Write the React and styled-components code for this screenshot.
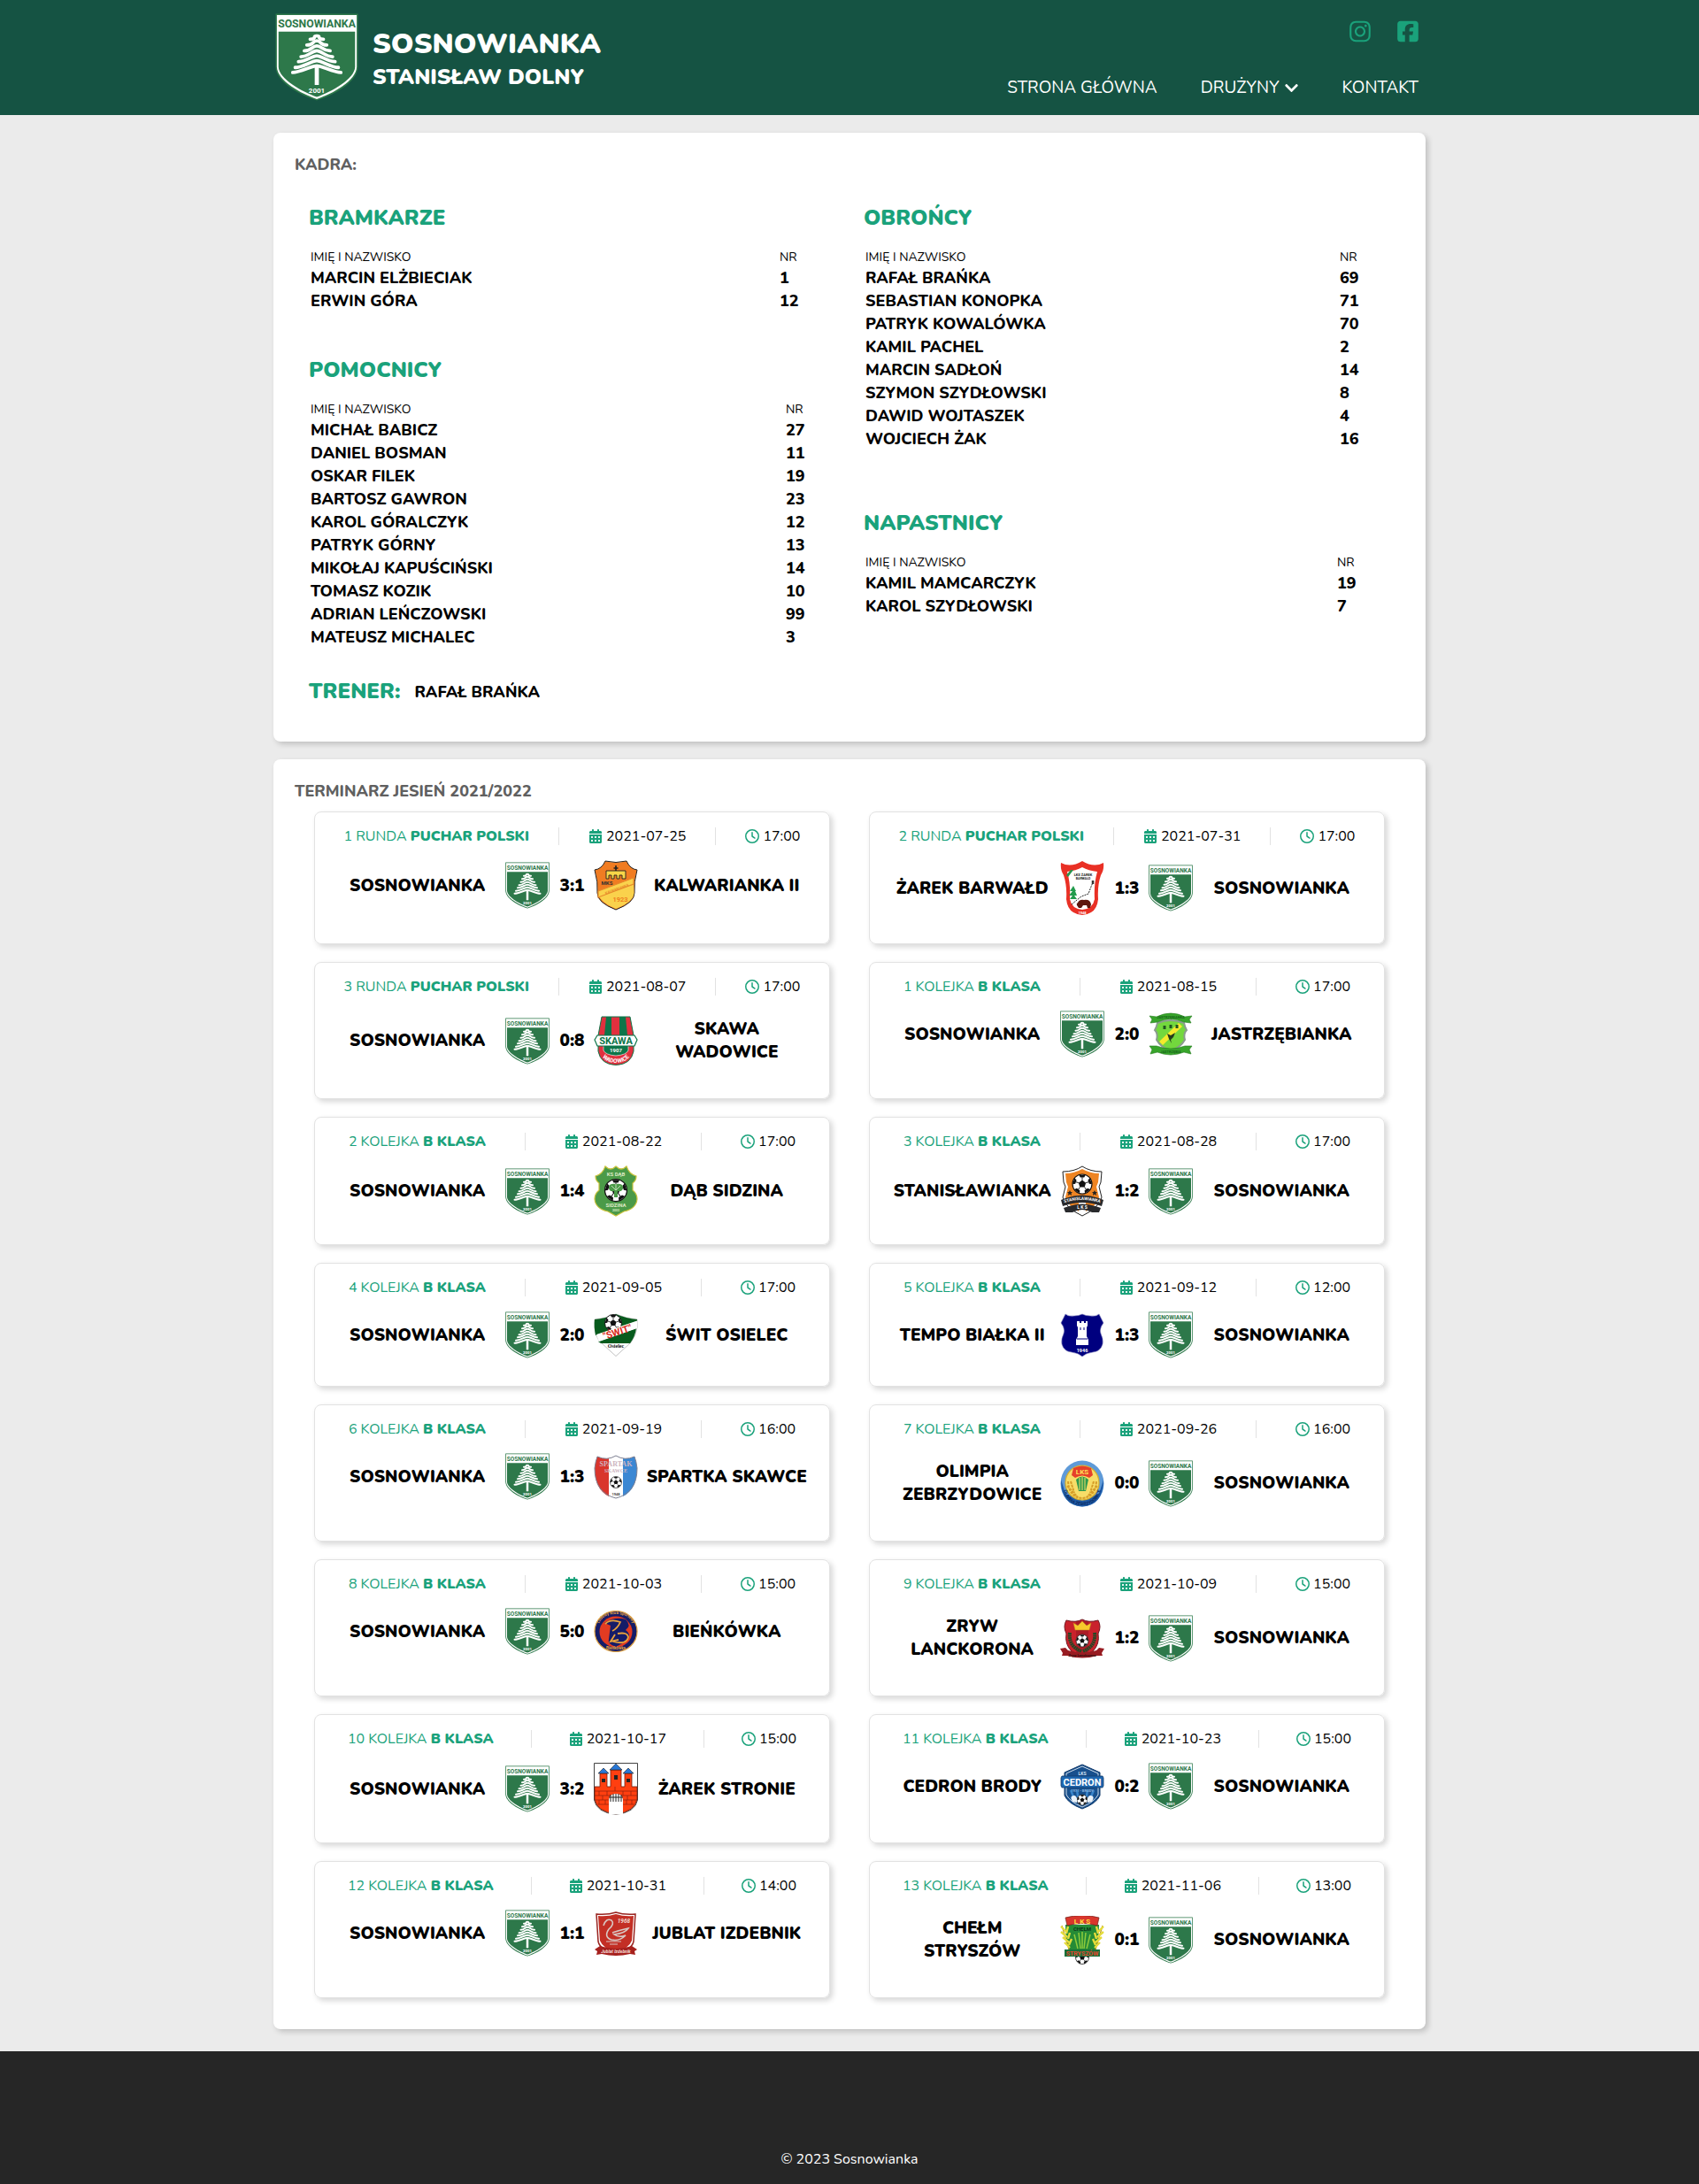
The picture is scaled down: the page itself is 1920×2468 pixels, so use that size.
import React from "react";
import styled, { createGlobalStyle } from "styled-components";
import { FaChevronDown } from "react-icons/fa";
import {
  FaInstagram,
  FaSquareFacebook,
  FaCalendarDays,
  FaRegClock,
} from "react-icons/fa6";

const color = {
  header: "#155343",
  accent: "#1aa27b",
  page: "#ebebeb",
  muted: "#606060",
  line: "#e2e2e2",
  footer: "#262626",
  crest: "#2d784a",
};

const GlobalStyle = createGlobalStyle`
  *, *::before, *::after { box-sizing: border-box; }
  body {
    margin: 0;
    background: ${color.page};
    color: #000;
    font-family: Nunito, Lato, "Open Sans", sans-serif;
    font-size: 19px;
    line-height: 26px;
  }
  h1, h2, h3, p, ul { margin: 0; padding: 0; }
  ul { list-style: none; }
  a { color: inherit; text-decoration: none; }
  svg { display: block; flex: none; }
`;

/* ---------- crests ---------- */

const CrestSvg = styled.svg`
  width: ${(p) => p.$width}px;
  height: ${(p) => p.$height}px;
  font-family: Roboto, "Liberation Sans", sans-serif;
  font-weight: 700;
  text-anchor: middle;
`;

const branches = [
  [42, 58, 27, 31],
  [38, 62, 33, 38],
  [35, 66, 39, 45],
  [31, 69, 45, 52],
  [28, 72, 51, 58],
  [24, 76, 57, 65],
  [21, 79, 63, 71],
];

function Sosnowianka({ large }) {
  return (
    <CrestSvg $width={large ? 94 : 50} $height={large ? 99 : 53} viewBox="0 0 100 105" role="img" aria-label="Herb Sosnowianka">
      <path d="M0.500 0.500H99.500V64C99.500 83 69 99 50 104.500C31 99 0.500 83 0.500 64Z" fill={color.crest} />
      <path d="M2 2H98V64C98 81 68 97 50 103C32 97 2 81 2 64Z" fill="#fff" />
      <path d="M4 22H96V64C96 79 67 94.500 50 100.500C33 94.500 4 79 4 64Z" fill={color.crest} />
      <text x="50" y="17" fontSize="13" fill={color.crest}>SOSNOWIANKA</text>
      <g fill="none" stroke="#fff" strokeWidth="4" strokeLinecap="round" strokeLinejoin="round">
        {branches.map(([l, r, top, end]) => (
          <path
            key={top}
            d={`M${l} ${end}C${l + 9} ${end} ${44} ${top} 50 ${top}C${56} ${top} ${r - 9} ${end} ${r} ${end}`}
          />
        ))}
      </g>
      <path d="M47.500 64H52.500V86H47.500Z" fill="#fff" />
      <text x="50" y="96" fontSize="8.500" fill="#fff">2001</text>
    </CrestSvg>
  );
}

function Ball({ x, y, r }) {
  const spots = [0, 72, 144, 216, 288];
  return (
    <g transform={`translate(${x} ${y}) scale(${r / 10})`}>
      <circle r="10" fill="#fff" stroke="#111" strokeWidth="1" />
      <path d="M0-4L3.800-1.200 2.400 3.200H-2.400L-3.800-1.200Z" fill="#111" />
      {spots.map((a) => (
        <g key={a} transform={`rotate(${a})`}>
          <path d="M-3.400-9.400H3.400L2-6.800H-2Z" fill="#111" />
          <path d="M0-4V-7" stroke="#111" strokeWidth="0.800" />
        </g>
      ))}
    </g>
  );
}

const crests = {
  kalwarianka: [57, (
    <>
      <path d="M13 1Q25 4 37 1Q41 10 49 11Q45 25 46 37Q46 48 25 56Q4 48 4 37Q5 25 1 11Q9 10 13 1Z" fill="#f07c22" stroke="#222" strokeWidth="1" />
      <path d="M5 37L45 22Q45 30 45.500 37Q45 47 25 55Q6 47 5 37Z" fill="#fad24c" />
      <path d="M5 35L45 20V27L5 42Z" fill="#fad24c" stroke="#e78a2b" strokeWidth="1.200" />
      <path d="M14 21V12H36V21H32V17H29V21H26V17H23V21H20V17H17V21Z" fill="#f8d648" stroke="#222" strokeWidth="0.900" />
      <path d="M25 6V12M22.500 9H27.500" stroke="#222" strokeWidth="1.600" />
      <text x="15" y="28" fontSize="6" fill="#333">MKS</text>
      <text x="26" y="34" fontSize="4" fill="#e78a2b" transform="rotate(-20 26 32)">KALWARIANKA</text>
      <text x="30" y="47" fontSize="7.500" fill="#ef8122">1923</text>
    </>
  )],
  barwald: [63, (
    <>
      <path d="M1 3Q12 9 25 1Q38 9 49 3Q50 11 46 17Q42 29 43 44Q42 55 35 59Q25 65 15 59Q8 55 7 44Q8 29 4 17Q0 11 1 3Z" fill="#e93025" />
      <path d="M8 13Q18 12 25 8Q32 12 42 13Q38 27 39 44Q37 55 25 56Q13 55 11 44Q12 27 8 13Z" fill="#fff" />
      <path d="M7 17L12 11H15L9 19Z" fill="#26934b" />
      <text x="26" y="18" fontSize="4" fill="#222">LKS ŻAREK</text>
      <text x="26" y="22" fontSize="3.500" fill="#222">BARWAŁD</text>
      <path d="M13 50L19 45 24 41 32 38 35 30 38 23" stroke="#222" fill="none" strokeWidth="1" strokeDasharray="2 1" />
      <path d="M37 23V27" stroke="#333" strokeWidth="2.500" />
      <path d="M15 29L11 35H14L10 40H14L11 44H19L16 40H19L17 35H18Z" fill="#229b4d" />
      <path d="M19 51Q18 49 20 48Q22 44 27 45Q34 44 35 50L34 54H31L30 51H26L24 54H21Z" fill="#5d160d" />
      <text x="25" y="61" fontSize="4" fill="#fff">1948</text>
    </>
  )],
  skawa: [56, (
    <>
      <path d="M9 1H41L45 22V40Q42 55 25 55.500Q8 55 5 40V22Z" fill="#e1303e" stroke="#0c7548" strokeWidth="1" />
      <path d="M14 1H20V22H12ZM29 1H36L38 22H29Z" fill="#0d7549" />
      <path d="M11 30H39V39Q37 44 25 45Q13 44 11 39Z" fill="#0d7549" stroke="#fff" strokeWidth="0.600" />
      <path d="M4 22H46L49 27 46 34H4L1 27Z" fill="#fff" stroke="#0c7548" strokeWidth="1.200" />
      <text x="25" y="32" fontSize="11" fill="#0c7548">SKAWA</text>
      <text x="25" y="41" fontSize="6" fill="#fff">1907</text>
      <path id="skawa-arc" d="M7 39Q10 53 25 53Q40 53 43 39" fill="none" />
      <text fontSize="6.500" fill="#fff"><textPath href="#skawa-arc" startOffset="50%">WADOWICE</textPath></text>
    </>
  )],
  jastrzebianka: [49, (
    <>
      <path d="M10 12Q25 6 40 12Q41 17 43 20Q39 24 41 31Q36 40 25 43Q14 40 9 31Q11 24 7 20Q9 17 10 12Z" fill="#73d83d" stroke="#8a9c8d" strokeWidth="2" />
      <path d="M12 33L34 12 38 16 16 37Z" fill="#f4ea2c" />
      <path d="M18 15V19M25 14V18M32 14V18" stroke="#21551f" strokeWidth="3" />
      <path d="M21 24L25 26 30 23 28 28 25 31 26 35 23 30Z" fill="#243b1c" />
      <path d="M1 4L9 5Q25-3 41 5L49 4 46 8 48 12 40 11Q25 4 10 11L2 12 4 8Z" fill="#38a52b" stroke="#247a1d" strokeWidth="0.600" />
      <path d="M1 38L9 38Q25 44 41 38L49 38 46 42 48 47 40 45Q25 51 10 45L2 47 4 42Z" fill="#38a52b" stroke="#247a1d" strokeWidth="0.600" />
      <text x="25" y="6.500" fontSize="4" fill="#17661a">JASTRZĘBIANKA</text>
      <text x="25" y="46" fontSize="4" fill="#17661a">JASTRZĘBIA</text>
    </>
  )],
  dab: [58, (
    <>
      <path d="M13 1Q19 7 25 1Q31 7 37 1Q40 10 48 12Q48 17 44 20V28Q49 32 49 38Q48 49 34 52L25 57 16 52Q2 49 1 38Q1 32 6 28V20Q2 17 2 12Q10 10 13 1Z" fill="#4b9a48" stroke="#c9c23c" strokeWidth="1.200" />
      <Ball x={25} y={28} r={12.5} />
      <path d="M17 25Q17 20 25 21Q33 20 33 25Q33 30 27 29V36H23V29Q17 30 17 25Z" fill="#4b9a48" />
      <path d="M20 23L25 28 30 23M25 21V28" stroke="#cfe3c4" strokeWidth="0.900" fill="none" />
      <text x="25" y="12" fontSize="6" fill="#dce9c5">KS DĄB</text>
      <text x="25" y="47" fontSize="6" fill="#dce9c5">SIDZINA</text>
      <text x="25" y="52" fontSize="3.500" fill="#dce9c5">2003</text>
    </>
  )],
  stanislawianka: [58, (
    <>
      <path d="M3 7Q16 7 25 1Q34 7 47 7L46 19 44 24 47 36Q44 48 25 57Q6 48 3 36L6 24 4 19Z" fill="#fff" stroke="#222" strokeWidth="1" />
      <path d="M6 9Q16 9 25 4Q34 9 44 9L43 19 41 24 44 36Q41 47 25 54Q9 47 6 36L9 24 7 19Z" fill="#ee8422" />
      <path d="M21 38H29V54H21Z" fill="#fff" />
      <Ball x={25} y={21} r={11} />
      <path d="M11 28L12 30H14L12.500 31.500 13 34 11 32.500 9 34 9.500 31.500 8 30H10ZM39 28L40 30H42L40.500 31.500 41 34 39 32.500 37 34 37.500 31.500 36 30H38Z" fill="#222" />
      <path d="M1 39L6 37Q25 30 44 37L49 39 47 46Q25 38 3 46Z" fill="#292a2d" />
      <path d="M4 48L10 46Q25 41 40 46L46 48 44 53H36Q25 47 14 53H6Z" fill="#292a2d" />
      <path id="stanislawianka-arc" d="M3 43Q25 35 47 43" fill="none" />
      <text fontSize="4.800" fill="#fff"><textPath href="#stanislawianka-arc" startOffset="50%">STANISŁAWIANKA</textPath></text>
      <text x="25" y="49" fontSize="5" fill="#fff">L K S</text>
    </>
  )],
  swit: [49, (
    <>
      <path d="M1 7Q13 6 25 1Q37 6 49 7V16Q48 25 42 33L25 48.500 8 33Q2 27 1 16Z" fill="#fff" stroke="#999" strokeWidth="0.600" />
      <path d="M1 7Q13 6 25 1Q37 6 49 7V9L2 25Q0 15 1 7Z" fill="#075b1d" />
      <path d="M5 32L48 17Q47 26 41 34H8Z" fill="#075b1d" />
      <Ball x={22} y={11} r={9.5} />
      <path d="M3 24L49 8.500V17L6 32Z" fill="#fff" />
      <text x="27" y="25" fontSize="11" fill="#d72b20" transform="rotate(-18 27 22)">"ŚWIT"</text>
      <text x="25" y="39" fontSize="6" fill="#111" fontFamily="Liberation Serif">Osielec</text>
    </>
  )],
  tempo: [49, (
    <>
      <path d="M6 1Q9 4 16 3Q21 3 25 1Q29 3 34 3Q41 4 44 1L49 11Q44 17 46 23Q49 29 48 35Q46 43 37 44Q29 45 25 49Q21 45 13 44Q4 43 2 35Q1 29 4 23Q6 17 1 11Z" fill="#00007f" stroke="#8585bd" strokeWidth="0.600" />
      <path d="M19 9H22V11H24V9H27V11H29V9H31V14L30 16V26L32 30V36H18V30L20 26V16L19 14Z" fill="#fff" />
      <path d="M23 16V19M27 16V19M19 29H31" stroke="#00007f" strokeWidth="1" />
      <text x="25" y="44" fontSize="5.500" fill="#fff">1946</text>
    </>
  )],
  spartak: [50, (
    <>
      <path d="M4 2Q15 7 25 1Q35 7 46 2Q48 7 49 15Q49 43 25 49Q1 43 1 15Q2 7 4 2Z" fill="#fff" />
      <path d="M4 2Q10 5 17 4V47Q1 39 1 15Q2 7 4 2Z" fill="#d9352c" />
      <path d="M46 2Q40 5 33 4V47Q49 39 49 15Q48 7 46 2Z" fill="#3b87d3" />
      <path d="M4 2Q15 7 25 1Q35 7 46 2Q48 7 49 15Q49 43 25 49Q1 43 1 15Q2 7 4 2Z" fill="none" stroke="#7d7f91" strokeWidth="1" />
      <text x="25" y="13" fontSize="8" fill="#cdb4c0" fontFamily="Liberation Serif">SPARTAK</text>
      <text x="25" y="20" fontSize="6" fill="#cdb4c0" fontFamily="Liberation Serif">SKAWCE</text>
      <Ball x={25} y={31} r={6.5} />
      <text x="25" y="46" fontSize="4" fill="#444">1948</text>
    </>
  )],
  olimpia: [53, (
    <>
      <ellipse cx="25" cy="26.500" rx="24.500" ry="26" fill="#5e9ad8" />
      <path d="M1 22Q1 51 25 52.500Q49 51 49 22L44 38 25 46 6 38Z" fill="#1e5aa6" />
      <ellipse cx="25" cy="25.500" rx="19" ry="19.500" fill="#f7dd68" stroke="#d6ad2e" strokeWidth="1.200" />
      <path d="M9 24Q10 42 25 43Q40 42 41 24M12 24L16 37M38 24L34 37M8 29L20 42M42 29L30 42" stroke="#d69d28" strokeWidth="2" fill="none" strokeDasharray="3 1" />
      <path d="M15 9Q25 4 35 9L37 17 33 20Q25 15 17 20L13 17Z" fill="#e6402a" />
      <text x="25" y="15.500" fontSize="8" fill="#ffdf55">LKS</text>
      <path d="M18 22Q25 15 32 22L29 35H21Z" fill="#2e9a4d" />
      <path d="M22 20V34M25 19V34M28 20V34" stroke="#f7dd68" strokeWidth="1" />
      <path id="olimpia-arc" d="M3 22Q3 51 25 51Q47 51 47 22" fill="none" />
      <text fontSize="5" fill="#0a2a63"><textPath href="#olimpia-arc" startOffset="50%">OLIMPIA ZEBRZYDOWICE</textPath></text>
    </>
  )],
  bienkowka: [47, (
    <>
      <ellipse cx="25" cy="23.500" rx="24" ry="23" fill="#151c68" stroke="#dda142" strokeWidth="1.200" />
      <ellipse cx="25" cy="24" rx="18.500" ry="17.500" fill="#e23b22" />
      <path d="M12 14Q24 6 36 10Q43 17 36 22Q44 28 36 35L25 41Q15 38 17 32L19 17Z" fill="#151c68" />
      <path d="M13 15Q19 9 30 13Q27 20 21 23M22 35Q37 39 39 30Q38 24 27 26M24 27L19 35 28 33" fill="none" stroke="#eba33b" strokeWidth="1.800" />
      <path id="bienkowka-arc" d="M4 24Q5 4 25 4Q45 4 46 24" fill="none" />
      <text fontSize="4.500" fill="#e4a444"><textPath href="#bienkowka-arc" startOffset="50%">Ludowy Klub Sportowy</textPath></text>
      <text x="25" y="44" fontSize="4.500" fill="#e4a444">Bieńkówka</text>
    </>
  )],
  zryw: [45, (
    <>
      <path d="M7 2Q18 5 25 1Q32 5 43 2Q47 9 43 17Q45 29 37 37L25 43 13 37Q5 29 7 17Q3 9 7 2Z" fill="#c9222c" stroke="#701820" strokeWidth="1" />
      <path d="M18 3H32V38L25 42 18 38Z" fill="#8d151f" opacity="0.500" />
      <path d="M15 5L20 8 25 3 30 8 35 5 33 13H17Z" fill="#f6c92c" stroke="#bb801f" strokeWidth="0.500" />
      <path d="M11 16Q9 31 24 37M39 16Q41 31 26 37" stroke="#244725" strokeWidth="4" fill="none" strokeDasharray="2 0.500" />
      <Ball x={25} y={25} r={7} />
      <path d="M0 34L6 33 9 36Q25 41 41 36L44 33 50 34 47 39 48 42 42 42Q25 47 8 42L2 42 3 39Z" fill="#981c22" />
      <text x="25" y="43" fontSize="4" fill="#31100f">Zryw Lanckorona</text>
    </>
  )],
  stronie: [59, (
    <>
      <path d="M0.500 0.500H49.500V42Q47 56 25 58.500Q3 56 0.500 42Z" fill="#fff" stroke="#444" strokeWidth="1" />
      <path d="M1 27H7V12H15V27H19V8H31V27H35V12H43V27H49V41Q47 55 25 58Q3 55 1 41Z" fill="#ff3f10" stroke="#702010" strokeWidth="0.800" />
      <path d="M5 12L11 6 17 12ZM18 8L25 1 32 8ZM33 12L39 6 45 12Z" fill="#2877d6" stroke="#222" strokeWidth="0.600" />
      <path d="M9 18H13V22H9ZM23 14H27V19H23ZM37 18H41V22H37Z" fill="#222" />
      <path d="M1 32H49M1 37H49M1 42H49M4 47H46M6 32V37M15 32V37M24 27V32M33 32V37M42 32V37M10 37V42M38 37V42M6 42V47M13 42V47M37 42V47M43 42V47" stroke="#8c210c" strokeWidth="0.700" />
      <path d="M17 58V43Q17 35 25 35Q33 35 33 43V58Q25 59 17 58Z" fill="#fff" />
      <path d="M19 36V44M22 35V44M25 35V44M28 35V44M31 36V44M17 39H33" stroke="#222" strokeWidth="1" />
    </>
  )],
  cedron: [52, (
    <>
      <path d="M25 1L45 10V36Q41 45 25 51Q9 45 5 36V10Z" fill="#18508d" stroke="#123a6b" strokeWidth="1" />
      <path d="M25 3L43 11V35Q39 43 25 49Q11 43 7 35V11Z" fill="none" stroke="#fff" strokeWidth="0.800" />
      <path d="M12 30L17 42M19 30L21 42M38 30L33 42M31 30L29 42" stroke="#3884cb" strokeWidth="2.500" />
      <Ball x={25} y={41} r={6} />
      <path d="M14 43Q10 36 16 36Q20 37 19 44ZM36 43Q40 36 34 36Q30 37 31 44Z" fill="#eaf2fa" />
      <path d="M2 14H48L49 16V25L48 27H2L1 25V16Z" fill="#1e67b0" stroke="#123a6b" strokeWidth="0.800" />
      <text x="25" y="24.500" fontSize="11" fill="#fff">CEDRON</text>
      <text x="25" y="13" fontSize="5" fill="#cfe1f4">LKS</text>
      <text x="25" y="32" fontSize="4" fill="#8bb6df">1971 • BRODY</text>
    </>
  )],
  jublat: [50, (
    <>
      <path d="M3 3Q16 4 25 1Q34 4 47 3L45 34Q43 43 25 49Q7 43 5 34Z" fill="#fff" stroke="#992521" strokeWidth="1.500" />
      <path d="M5 5Q16 6 25 3Q34 6 45 5L43 33Q40 41 25 47Q10 41 7 33Z" fill="#c32f25" />
      <path d="M11 16Q14 7 20 10Q24 14 17 20Q11 29 20 32Q29 34 36 27Q28 30 23 26Q35 25 39 19Q30 21 21 24" fill="none" stroke="#d8c8c4" strokeWidth="1.600" />
      <path d="M14 34H31M18 37H27" stroke="#d8c8c4" strokeWidth="1.200" />
      <text x="34" y="13" fontSize="6.500" fill="#f0d7d1" fontStyle="italic">1968</text>
      <path d="M1 43L7 39Q25 45 43 39L49 43 46 45 47 49 41 48Q25 52 9 48L3 49 4 45Z" fill="#a6211e" />
      <text x="25" y="47" fontSize="5" fill="#f4ded8" fontStyle="italic">Jublat Izdebnik</text>
    </>
  )],
  chelm: [55, (
    <>
      <path d="M6 10H44Q44 30 38 44H12Q6 30 6 10Z" fill="#258b36" />
      <path d="M6 2Q25-3 44 2L42 11Q25 6 8 11Z" fill="#d9362d" stroke="#702019" strokeWidth="0.700" />
      <text x="25" y="8.500" fontSize="8" fill="#ffdf3b">L K S</text>
      <text x="25" y="17" fontSize="6" fill="#0c351a">CHEŁM</text>
      <path d="M16 21L20 37M21 19L23 37M25 18V37M29 19L27 37M34 21L30 37" stroke="#8ecb3c" strokeWidth="1.500" />
      <path d="M2 11L10 38M48 11L40 38" stroke="#b9971e" strokeWidth="1.200" />
      <path d="M1 12L7 18M1 18L8 24M3 24L10 30M5 30L11 36M9 12L7 20M11 19L9 26M13 26L10 33M49 12L43 18M49 18L42 24M47 24L40 30M45 30L39 36M41 12L43 20M39 19L41 26M37 26L40 33" stroke="#e5dc3b" strokeWidth="2.400" />
      <Ball x={25} y={47} r={7.5} />
      <path d="M5 38H45V46H5Z" fill="#17713a" />
      <text x="25" y="44.500" fontSize="7" fill="#e5462d">STRYSZÓW</text>
    </>
  )],
};

function Crest({ club }) {
  if (club === "sosnowianka") return <Sosnowianka />;
  const [height, drawing] = crests[club];
  return (
    <CrestSvg $width={50} $height={height} viewBox={`0 0 50 ${height}`} aria-hidden="true">
      {drawing}
    </CrestSvg>
  );
}

/* ---------- header ---------- */

const Container = styled.div`
  width: 100%;
  max-width: 1302px;
  margin: 0 auto;
`;

const Header = styled.header`
  background: ${color.header};
  color: #fff;
`;

const HeaderInner = styled(Container)`
  display: flex;
  justify-content: space-between;
  min-height: 130px;
  padding: 15px 8px 16px 2px;
`;

const Brand = styled.a`
  display: flex;
  align-items: center;
  gap: 16px;
`;

const BrandName = styled.h1`
  display: flex;
  flex-direction: column;
  padding-top: 4px;
  font-size: 32px;
  font-weight: 900;
  line-height: 40px;
`;

const BrandPlace = styled.span`
  font-size: 24px;
  line-height: 34px;
`;

const HeaderSide = styled.div`
  display: flex;
  flex-direction: column;
  align-items: flex-end;
  gap: 37px;
  padding-top: 7px;
`;

const Socials = styled.div`
  display: flex;
  gap: 30px;
  color: ${color.accent};

  svg {
    width: 24px;
    height: 27px;
  }
`;

const Nav = styled.nav`
  display: flex;
  gap: 49px;
  font-size: 19px;
`;

const NavLink = styled.a`
  display: flex;
  align-items: center;
  gap: 5px;

  svg { font-size: 17px; }
`;

/* ---------- panels ---------- */

const Main = styled(Container)`
  display: flex;
  flex-direction: column;
  gap: 20px;
  padding: 20px 0 25px;
`;

const Panel = styled.section`
  padding: 23px 24px ${(p) => p.$bottom}px;
  border-radius: 8px;
  background: #fff;
  box-shadow: 3px 3px 6px rgba(0, 0, 0, 0.18);
`;

const PanelTitle = styled.h2`
  color: ${color.muted};
  font-size: 18px;
  font-weight: 800;
  line-height: 26px;
`;

const Squad = styled.div`
  display: grid;
  grid-template-columns: 1fr 1fr;
  padding-top: 31px;
`;

const SquadColumn = styled.div`
  display: flex;
  flex-direction: column;
  gap: ${(p) => p.$gap}px;
  padding: 0 16px;
`;

const GroupTitle = styled.h3`
  color: ${color.accent};
  font-size: 24px;
  font-weight: 900;
  line-height: 33px;
`;

const PlayerTable = styled.table`
  width: 100%;
  margin-top: 17px;
  border-collapse: collapse;
  text-align: left;
  font-size: 18px;
  font-weight: 800;

  th {
    padding: 0 2px;
    font-size: 14px;
    font-weight: 400;
    line-height: 21px;
  }

  td { padding: 0 2px; }
`;

const NumberHead = styled.th`
  width: ${(p) => p.$width}px;
`;

const Coach = styled.div`
  display: flex;
  align-items: center;
  gap: 16px;
  padding: 32px 16px 0;
  font-size: 18px;
  font-weight: 800;
`;

/* ---------- schedule ---------- */

const Matches = styled.div`
  display: grid;
  grid-template-columns: 1fr 1fr;
  row-gap: 20px;
  padding-top: 10px;
`;

const MatchCard = styled.article`
  width: 93%;
  margin: 0 auto;
  padding: 16px 16px 31px;
  border: 1px solid ${color.line};
  border-radius: 8px;
  box-shadow: 3px 3px 6px rgba(0, 0, 0, 0.16);
`;

const MatchInfo = styled.div`
  display: flex;
  align-items: center;
  justify-content: space-around;
  font-size: 16px;
  line-height: 22px;
  font-weight: 400;
`;

const Round = styled.span`
  color: ${color.accent};
`;

const Competition = styled.strong`
  font-weight: 900;
`;

const When = styled.time`
  display: flex;
  align-items: center;
  gap: 4px;

  svg { color: ${color.accent}; }
`;

const Divider = styled.span`
  width: 1px;
  height: 20px;
  background: ${color.line};
`;

const Teams = styled.div`
  display: grid;
  grid-template-columns: 1fr 50px 50px 50px 1fr;
  align-items: center;
  margin-top: 16px;
  text-align: center;
  font-size: 19px;
  font-weight: 900;
`;

const TeamName = styled.span`
  padding: 8px 0;
  white-space: pre-line;
`;

const Footer = styled.footer`
  display: flex;
  align-items: flex-end;
  justify-content: center;
  min-height: 150px;
  padding: 16px;
  background: ${color.footer};
  color: #fff;
  font-size: 16px;
  line-height: 24px;
`;

/* ---------- data ---------- */

const goalkeepers = [["MARCIN ELŻBIECIAK", 1], ["ERWIN GÓRA", 12]];
const midfielders = [
  ["MICHAŁ BABICZ", 27], ["DANIEL BOSMAN", 11], ["OSKAR FILEK", 19], ["BARTOSZ GAWRON", 23],
  ["KAROL GÓRALCZYK", 12], ["PATRYK GÓRNY", 13], ["MIKOŁAJ KAPUŚCIŃSKI", 14],
  ["TOMASZ KOZIK", 10], ["ADRIAN LEŃCZOWSKI", 99], ["MATEUSZ MICHALEC", 3],
];
const defenders = [
  ["RAFAŁ BRAŃKA", 69], ["SEBASTIAN KONOPKA", 71], ["PATRYK KOWALÓWKA", 70], ["KAMIL PACHEL", 2],
  ["MARCIN SADŁOŃ", 14], ["SZYMON SZYDŁOWSKI", 8], ["DAWID WOJTASZEK", 4], ["WOJCIECH ŻAK", 16],
];
const forwards = [["KAMIL MAMCARCZYK", 19], ["KAROL SZYDŁOWSKI", 7]];

const CUP = "PUCHAR POLSKI";
const LEAGUE = "B KLASA";
const us = ["SOSNOWIANKA", "sosnowianka"];

const matches = [
  ["1 RUNDA", CUP, "2021-07-25", "17:00", us, "3:1", ["KALWARIANKA II", "kalwarianka"]],
  ["2 RUNDA", CUP, "2021-07-31", "17:00", ["ŻAREK BARWAŁD", "barwald"], "1:3", us],
  ["3 RUNDA", CUP, "2021-08-07", "17:00", us, "0:8", ["SKAWA\nWADOWICE", "skawa"]],
  ["1 KOLEJKA", LEAGUE, "2021-08-15", "17:00", us, "2:0", ["JASTRZĘBIANKA", "jastrzebianka"]],
  ["2 KOLEJKA", LEAGUE, "2021-08-22", "17:00", us, "1:4", ["DĄB SIDZINA", "dab"]],
  ["3 KOLEJKA", LEAGUE, "2021-08-28", "17:00", ["STANISŁAWIANKA", "stanislawianka"], "1:2", us],
  ["4 KOLEJKA", LEAGUE, "2021-09-05", "17:00", us, "2:0", ["ŚWIT OSIELEC", "swit"]],
  ["5 KOLEJKA", LEAGUE, "2021-09-12", "12:00", ["TEMPO BIAŁKA II", "tempo"], "1:3", us],
  ["6 KOLEJKA", LEAGUE, "2021-09-19", "16:00", us, "1:3", ["SPARTKA SKAWCE", "spartak"]],
  ["7 KOLEJKA", LEAGUE, "2021-09-26", "16:00", ["OLIMPIA\nZEBRZYDOWICE", "olimpia"], "0:0", us],
  ["8 KOLEJKA", LEAGUE, "2021-10-03", "15:00", us, "5:0", ["BIEŃKÓWKA", "bienkowka"]],
  ["9 KOLEJKA", LEAGUE, "2021-10-09", "15:00", ["ZRYW\nLANCKORONA", "zryw"], "1:2", us],
  ["10 KOLEJKA", LEAGUE, "2021-10-17", "15:00", us, "3:2", ["ŻAREK STRONIE", "stronie"]],
  ["11 KOLEJKA", LEAGUE, "2021-10-23", "15:00", ["CEDRON BRODY", "cedron"], "0:2", us],
  ["12 KOLEJKA", LEAGUE, "2021-10-31", "14:00", us, "1:1", ["JUBLAT IZDEBNIK", "jublat"]],
  ["13 KOLEJKA", LEAGUE, "2021-11-06", "13:00", ["CHEŁM\nSTRYSZÓW", "chelm"], "0:1", us],
];

function PlayerGroup({ title, players, numberWidth }) {
  return (
    <div>
      <GroupTitle>{title}</GroupTitle>
      <PlayerTable>
        <thead>
          <tr>
            <th>IMIĘ I NAZWISKO</th>
            <NumberHead $width={numberWidth}>NR</NumberHead>
          </tr>
        </thead>
        <tbody>
          {players.map(([name, number]) => (
            <tr key={name}>
              <td>{name}</td>
              <td>{number}</td>
            </tr>
          ))}
        </tbody>
      </PlayerTable>
    </div>
  );
}

function Match({ match }) {
  const [round, competition, date, time, home, score, away] = match;
  return (
    <MatchCard>
      <MatchInfo>
        <Round>{round} <Competition>{competition}</Competition></Round>
        <Divider />
        <When dateTime={date}><FaCalendarDays />{date}</When>
        <Divider />
        <When dateTime={time}><FaRegClock />{time}</When>
      </MatchInfo>
      <Teams>
        <TeamName>{home[0]}</TeamName>
        <Crest club={home[1]} />
        <span>{score}</span>
        <Crest club={away[1]} />
        <TeamName>{away[0]}</TeamName>
      </Teams>
    </MatchCard>
  );
}

export default function App() {
  return (
    <>
      <GlobalStyle />
      <Header>
        <HeaderInner>
          <Brand href="#">
            <Sosnowianka large />
            <BrandName>
              SOSNOWIANKA
              <BrandPlace>STANISŁAW DOLNY</BrandPlace>
            </BrandName>
          </Brand>
          <HeaderSide>
            <Socials>
              <a href="#instagram" aria-label="Instagram"><FaInstagram /></a>
              <a href="#facebook" aria-label="Facebook"><FaSquareFacebook /></a>
            </Socials>
            <Nav>
              <NavLink href="#">STRONA GŁÓWNA</NavLink>
              <NavLink href="#druzyny">DRUŻYNY<FaChevronDown /></NavLink>
              <NavLink href="#kontakt">KONTAKT</NavLink>
            </Nav>
          </HeaderSide>
        </HeaderInner>
      </Header>
      <Main as="main">
        <Panel $bottom={40}>
          <PanelTitle>KADRA:</PanelTitle>
          <Squad>
            <SquadColumn $gap={49}>
              <PlayerGroup title="BRAMKARZE" players={goalkeepers} numberWidth={65} />
              <PlayerGroup title="POMOCNICY" players={midfielders} numberWidth={58} />
            </SquadColumn>
            <SquadColumn $gap={66}>
              <PlayerGroup title="OBROŃCY" players={defenders} numberWidth={59} />
              <PlayerGroup title="NAPASTNICY" players={forwards} numberWidth={62} />
            </SquadColumn>
          </Squad>
          <Coach>
            <GroupTitle>TRENER:</GroupTitle>
            <span>RAFAŁ BRAŃKA</span>
          </Coach>
        </Panel>
        <Panel $bottom={35}>
          <PanelTitle>TERMINARZ JESIEŃ 2021/2022</PanelTitle>
          <Matches>
            {matches.map((match) => <Match key={match[2]} match={match} />)}
          </Matches>
        </Panel>
      </Main>
      <Footer>© 2023 Sosnowianka</Footer>
    </>
  );
}
